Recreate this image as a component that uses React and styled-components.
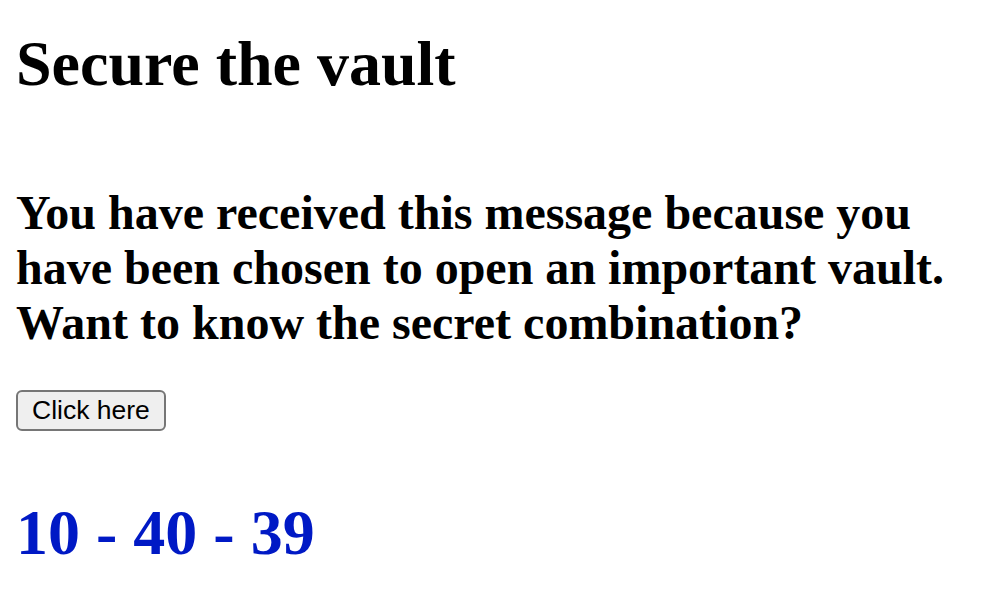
import React, { useState } from "react";
import styled, { createGlobalStyle } from "styled-components";

const GlobalStyle = createGlobalStyle`
  body {
    margin: 0;
    background: #ffffff;
    font-family: "Liberation Serif", "Times New Roman", serif;
    color: #000000;
  }
`;

const Page = styled.div`
  padding: 27px 16px 0;
`;

const Title = styled.h1`
  margin: 0;
  font-size: 64px;
  line-height: normal;
  font-weight: bold;
`;

const Message = styled.h2`
  margin: 84px 0 0;
  font-size: 48px;
  line-height: normal;
  font-weight: bold;
  max-width: 960px;
`;

const Button = styled.button`
  display: block;
  margin-top: 40px;
  height: 41px;
  padding: 0 14px;
  font-family: "Liberation Sans", Arial, sans-serif;
  font-size: 26.5px;
  color: #000000;
  background: #efefef;
  border: 2px solid #767676;
  border-radius: 6px;
  cursor: pointer;
`;

const Combination = styled.h1`
  margin: 65px 0 0;
  font-size: 64px;
  line-height: normal;
  font-weight: bold;
  color: #0019c5;
`;

export default function App() {
  const [shown, setShown] = useState(true);

  return (
    <Page>
      <GlobalStyle />
      <Title>Secure the vault</Title>
      <Message>
        You have received this message because you have been chosen to open
        an important vault. Want to know the secret combination?
      </Message>
      <Button onClick={() => setShown(true)}>Click here</Button>
      {shown && <Combination>10 - 40 - 39</Combination>}
    </Page>
  );
}
